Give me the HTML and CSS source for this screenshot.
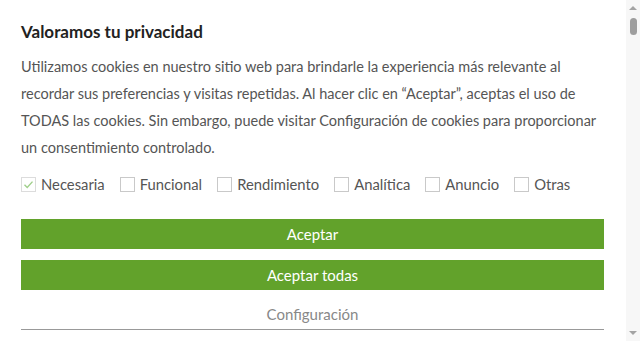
FILE: index.html
```html
<!DOCTYPE html>
<html lang="es">
<head>
<meta charset="utf-8">
<link rel="stylesheet" href="styles.css">
</head>
<body>
<div class="page">
  <div class="banner">
    <h1 class="title">Valoramos tu privacidad</h1>
    <p class="text">Utilizamos cookies en nuestro sitio web para brindarle la experiencia más relevante al recordar sus preferencias y visitas repetidas. Al hacer clic en “Aceptar”, aceptas el uso de TODAS las cookies. Sin embargo, puede visitar Configuración de cookies para proporcionar un consentimiento controlado.</p>
    <div class="checks">
      <label class="check"><span class="box checked"><svg viewBox="0 0 15 15" width="15" height="15"><path d="M3.5 7.8 L6.2 10.4 L11.5 4.6" fill="none" stroke="#9fcf8a" stroke-width="1.4"/></svg></span>Necesaria</label>
      <label class="check"><span class="box"></span>Funcional</label>
      <label class="check"><span class="box"></span>Rendimiento</label>
      <label class="check"><span class="box"></span>Analítica</label>
      <label class="check"><span class="box"></span>Anuncio</label>
      <label class="check"><span class="box"></span>Otras</label>
    </div>
    <div class="btn">Aceptar</div>
    <div class="btn">Aceptar todas</div>
    <div class="config">Configuración</div>
  </div>
  <div class="scrollbar">
    <div class="arrow up"></div>
    <div class="thumb"></div>
    <div class="track"></div>
    <div class="arrow down"></div>
  </div>
</div>
</body>
</html>
```
FILE: styles.css
```css
html, body {
  margin: 0;
  padding: 0;
  background: #fff;
}
body {
  font-family: Lato, "Open Sans", sans-serif;
  overflow: hidden;
}
.page {
  display: flex;
  width: 640px;
  height: 341px;
}
.banner {
  flex: 1;
  padding: 21px 22px 0 21px;
  box-sizing: border-box;
}
.title {
  margin: 0;
  font-size: 17px;
  font-weight: 700;
  color: #222;
  line-height: 22px;
}
.text {
  margin: 10px 0 0;
  font-size: 14.5px;
  line-height: 27.1px;
  color: #555;
}
.checks {
  display: flex;
  align-items: center;
  gap: 15px;
  margin-top: 14px;
  font-size: 14.8px;
  color: #555;
}
.check {
  display: flex;
  align-items: center;
  gap: 5px;
  line-height: 18px;
}
.box {
  width: 15px;
  height: 15px;
  box-sizing: border-box;
  border: 1px solid #c9c9c9;
  background: #fff;
  display: block;
  position: relative;
}
.box.checked {
  border-color: #dcdcdc;
}
.box svg {
  position: absolute;
  left: -1px;
  top: -1px;
}
.btn {
  height: 30px;
  margin-top: 11px;
  background: #62a22b;
  color: #fff;
  font-size: 15px;
  line-height: 30px;
  text-align: center;
}
.checks + .btn {
  margin-top: 26px;
}
.config {
  margin-top: 10px;
  height: 29px;
  line-height: 29px;
  font-size: 15px;
  color: #888;
  text-align: center;
  border-bottom: 1px solid #999;
}
.scrollbar {
  width: 14px;
  background: #f7f7f7;
  display: flex;
  flex-direction: column;
  align-items: center;
}
.arrow {
  width: 0;
  height: 0;
  border-left: 4px solid transparent;
  border-right: 4px solid transparent;
}
.arrow.up {
  margin-top: 6px;
  border-bottom: 4px solid #a3a3a3;
}
.arrow.down {
  margin-bottom: 6px;
  border-top: 4px solid #a3a3a3;
}
.thumb {
  margin-top: 8px;
  width: 7px;
  height: 17px;
  border-radius: 4px;
  background: #9e9e9e;
}
.track {
  flex: 1;
}
```
